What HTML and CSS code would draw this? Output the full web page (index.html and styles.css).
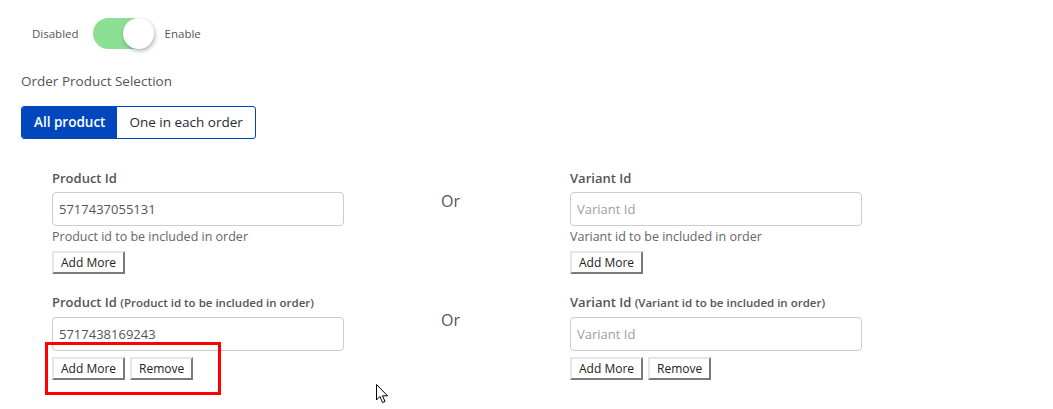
FILE: index.html
```html
<!DOCTYPE html>
<html>
<head>
    <meta name="viewport" content="width=device-width, initial-scale=1.0">
    <title>Order Product Selection</title>
    <link rel="stylesheet" href="styles.css">
</head>
<body>
    <div class="toggle-row">
        <span class="toggle-text">Disabled</span>
        <span class="switch"><span class="knob"></span></span>
        <span class="toggle-text">Enable</span>
    </div>

    <div class="section-title">Order Product Selection</div>

    <div class="btn-group">
        <a class="seg active">All product</a>
        <a class="seg">One in each order</a>
    </div>

    <div class="ids">
        <!-- first row -->
        <div class="id-row">
            <div class="field">
                <label class="lbl">Product Id</label>
                <input class="inp" type="text" value="5717437055131">
                <div class="help">Product id to be included in order</div>
                <div class="btns"><button class="btn">Add More</button></div>
            </div>
            <div class="or">Or</div>
            <div class="field">
                <label class="lbl">Variant Id</label>
                <input class="inp" type="text" placeholder="Variant Id">
                <div class="help">Variant id to be included in order</div>
                <div class="btns"><button class="btn">Add More</button></div>
            </div>
        </div>

        <!-- second row -->
        <div class="id-row second">
            <div class="field">
                <label class="lbl">Product Id <small>(Product id to be included in order)</small></label>
                <input class="inp" type="text" value="5717438169243">
                <div class="btns marked">
                    <button class="btn">Add More</button>
                    <button class="btn">Remove</button>
                    <span class="mark"></span>
                </div>
            </div>
            <div class="or">Or</div>
            <div class="field">
                <label class="lbl">Variant Id <small>(Variant id to be included in order)</small></label>
                <input class="inp" type="text" placeholder="Variant Id">
                <div class="btns">
                    <button class="btn">Add More</button>
                    <button class="btn">Remove</button>
                </div>
            </div>
        </div>
    </div>

    <svg class="cursor" width="13" height="21" viewBox="0 0 13 21">
        <path d="M0.5 0.5 L0.5 16 L4 12.5 L6.5 18.5 L9 17.5 L6.5 11.8 L11.5 11.8 Z" fill="#fff" stroke="#000" stroke-width="1"/>
    </svg>
</body>
</html>
```

FILE: styles.css
```css
html, body {
    min-height: 409px;
}
body {
    margin: 0;
    background-color: #ffffff;
    font-family: "Open Sans", "Noto Sans", sans-serif;
    color: #5c5c5c;
    position: relative;
}

.toggle-row {
    display: flex;
    align-items: center;
    padding: 18px 0 0 32px;
    height: 31px;
}
.toggle-text {
    font-size: 11.5px;
    color: #555;
}
.switch {
    position: relative;
    width: 58px;
    height: 31px;
    margin: 0 14px 0 14px;
    border-radius: 16px;
    background-color: #8ddf93;
}
.knob {
    position: absolute;
    right: -3px;
    top: 0;
    width: 31px;
    height: 31px;
    border-radius: 50%;
    background-color: #ffffff;
    box-shadow: 1px 2px 4px rgba(0, 0, 0, 0.3);
}

.section-title {
    margin: 23px 0 0 21px;
    font-size: 13.5px;
    line-height: 18px;
    color: #555;
}

.btn-group {
    display: inline-flex;
    margin: 16px 0 0 21px;
    border: 1px solid #0047bf;
    border-radius: 3px;
    overflow: hidden;
}
.seg {
    display: block;
    padding: 0 12px;
    height: 31px;
    line-height: 31px;
    font-size: 13.5px;
    color: #1f2937;
    cursor: pointer;
}
.seg.active {
    background-color: #0047bf;
    color: #ffffff;
    font-weight: 600;
}

.ids {
    padding: 30px 0 0 52px;
}
.id-row {
    display: grid;
    grid-template-columns: 292px 226px 292px;
}
.id-row.second {
    margin-top: 19px;
}
.field {
    display: flex;
    flex-direction: column;
    align-items: flex-start;
}
.lbl {
    font-size: 13px;
    font-weight: 600;
    line-height: 18px;
    color: #555;
    margin-bottom: 5px;
}
.lbl small {
    font-size: 11.5px;
}
.inp {
    box-sizing: border-box;
    width: 292px;
    height: 34px;
    padding: 0 6px;
    border: 1px solid #cccccc;
    border-radius: 4px;
    font-family: "Open Sans", "Noto Sans", sans-serif;
    font-size: 13px;
    color: #555;
    outline: none;
}
.inp::placeholder {
    color: #a0a0a0;
}
.help {
    font-size: 12.5px;
    line-height: 18px;
    color: #666;
    margin-top: 2px;
}
.btns {
    position: relative;
    display: flex;
    gap: 5px;
    margin-top: 5px;
}
.id-row.second .btns {
    margin-top: 6px;
}
.btn {
    height: 23px;
    padding: 0 7px;
    background-color: #ffffff;
    border: 2px solid;
    border-color: #e6e6e6 #7a7a7a #7a7a7a #e6e6e6;
    font-family: "Open Sans", "Noto Sans", sans-serif;
    font-size: 12px;
    color: #222;
    cursor: pointer;
}
.mark {
    position: absolute;
    left: -7px;
    top: -15px;
    width: 170px;
    height: 47px;
    border: 3px solid #ff0000;
}

.or {
    padding: 21px 0 0 97px;
    font-size: 16px;
    color: #555;
}
.id-row.second .or {
    padding-top: 16px;
}

.cursor {
    position: absolute;
    left: 376px;
    top: 384px;
}
```
